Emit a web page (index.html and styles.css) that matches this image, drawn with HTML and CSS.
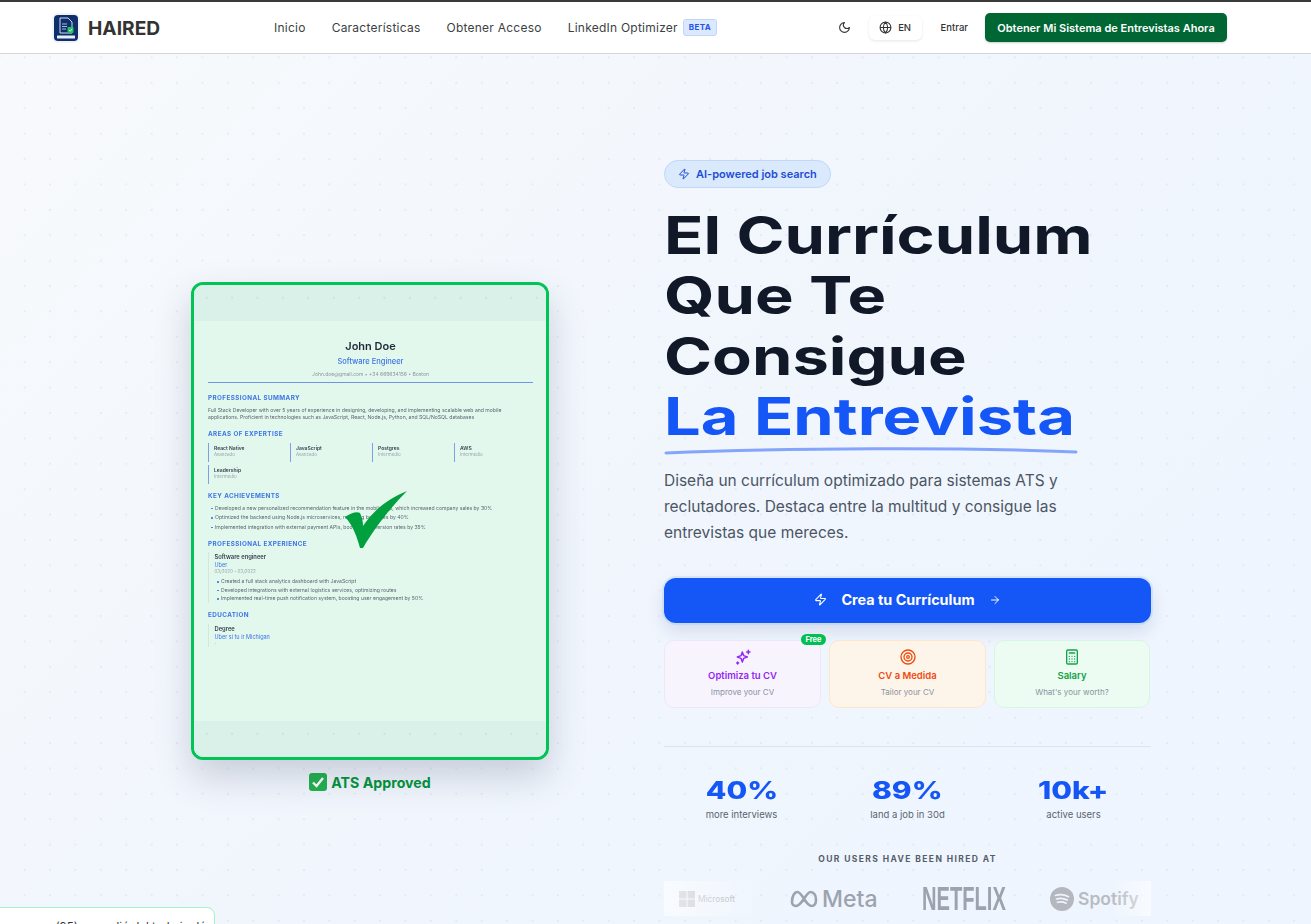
FILE: index.html
```html
<!DOCTYPE html>
<html lang="es">
<head>
<meta charset="utf-8">
<title>HAIRED</title>
<link rel="stylesheet" href="styles.css">
</head>
<body>
<div class="page">
  <header class="nav">
    <a class="brand">
      <span class="logo-tile">
        <svg width="24" height="26" viewBox="0 0 24 26"><rect width="24" height="26" rx="4" fill="#0f2f6b"/><path d="M6 3h8l4 4v11H6z" fill="none" stroke="#cfe0f5" stroke-width="1"/><path d="M8 9h5M8 11.500h5M8 14h4" stroke="#cfe0f5" stroke-width=".8"/><rect x="13.500" y="12" width="6" height="6" rx="1" fill="#22c55e"/><path d="M15 15l1.200 1.200 2-2.400" fill="none" stroke="#fff" stroke-width=".8"/><rect x="3" y="20.500" width="18" height="3" rx=".5" fill="#e8eef8"/></svg>
      </span>
      <span class="brand-name">HAIRED</span>
    </a>
    <nav class="links">
      <a>Inicio</a><a>Características</a><a>Obtener Acceso</a>
      <a class="with-tag">LinkedIn Optimizer <span class="beta">BETA</span></a>
    </nav>
    <div class="actions">
      <svg class="moon" width="13" height="13" viewBox="0 0 24 24" fill="none" stroke="#333" stroke-width="2" stroke-linecap="round" stroke-linejoin="round"><path d="M12 3a6 6 0 0 0 9 9 9 9 0 1 1-9-9Z"/></svg>
      <button class="lang"><svg width="13" height="13" viewBox="0 0 24 24" fill="none" stroke="#333" stroke-width="2"><circle cx="12" cy="12" r="10"/><path d="M12 2a14.500 14.500 0 0 0 0 20 14.500 14.500 0 0 0 0-20M2 12h20"/></svg>EN</button>
      <a class="login">Entrar</a>
      <a class="cta">Obtener Mi Sistema de Entrevistas Ahora</a>
    </div>
  </header>

  <main class="hero">
    <section class="preview">
      <div class="card">
        <div class="band"></div>
        <div class="resume">
          <div class="r-head">
            <div class="r-name">John Doe</div>
            <div class="r-title">Software Engineer</div>
            <div class="r-contact">John.doe@gmail.com • +34 669634156 • Boston</div>
          </div>
          <h4 class="r-h first">PROFESSIONAL SUMMARY</h4>
          <p class="r-summary">Full Stack Developer with over 5 years of experience in designing, developing, and implementing scalable web and mobile applications. Proficient in technologies such as JavaScript, React, Node.js, Python, and SQL/NoSQL databases</p>
          <h4 class="r-h areas">AREAS OF EXPERTISE</h4>
          <div class="skills">
            <div class="skill"><b>React Native</b><span>Avanzado</span></div>
            <div class="skill"><b>JavaScript</b><span>Avanzado</span></div>
            <div class="skill"><b>Postgres</b><span>Intermedio</span></div>
            <div class="skill"><b>AWS</b><span>Intermedio</span></div>
            <div class="skill"><b>Leadership</b><span>Intermedio</span></div>
          </div>
          <h4 class="r-h key">KEY ACHIEVEMENTS</h4>
          <ul class="r-list">
            <li>Developed a new personalized recommendation feature in the mobile app, which increased company sales by 30%</li>
            <li>Optimized the backend using Node.js microservices, reducing bug rates by 40%</li>
            <li>Implemented integration with external payment APIs, boosting conversion rates by 35%</li>
          </ul>
          <h4 class="r-h exp">PROFESSIONAL EXPERIENCE</h4>
          <div class="entry">
            <div class="e-role">Software engineer</div>
            <div class="e-org">Uber</div>
            <div class="e-date">03/2020 - 03/2022</div>
            <ul class="e-list">
              <li>Created a full stack analytics dashboard with JavaScript</li>
              <li>Developed integrations with external logistics services, optimizing routes</li>
              <li>Implemented real-time push notification system, boosting user engagement by 50%</li>
            </ul>
          </div>
          <h4 class="r-h edu">EDUCATION</h4>
          <div class="entry edu-entry">
            <div class="e-role">Degree</div>
            <div class="e-org">Uber si tu ir Michigan</div>
            <div class="e-date">-</div>
          </div>
        </div>
        <div class="band"></div>
        <svg class="bigcheck" width="66" height="62" viewBox="0 0 66 62"><path d="M0 26 C6 22 12 20 15 22 C17 26 18 31 18 35 C28 20 42 8 62 0 C48 14 30 36 18 57 L15 57 C12 46 8 34 0 26Z" fill="#00a03e"/></svg>
      </div>
      <div class="approved">
        <svg width="18" height="18" viewBox="0 0 18 18"><rect width="18" height="18" rx="3" fill="#22b14c"/><path d="M4 9.500l3.500 3.500L14 5" fill="none" stroke="#fff" stroke-width="2.400"/></svg>
        ATS Approved
      </div>
    </section>

    <section class="pitch">
      <div class="pill">
        <svg width="12" height="12" viewBox="0 0 24 24" fill="none" stroke="#1d4ed8" stroke-width="2" stroke-linejoin="round"><path d="M4 14a1 1 0 0 1-.78-1.630l9.900-10.200a.5.5 0 0 1 .86.460l-1.920 6.020A1 1 0 0 0 13 10h7a1 1 0 0 1 .78 1.630l-9.900 10.200a.5.5 0 0 1-.86-.460l1.920-6.020A1 1 0 0 0 11 14z"/></svg>
        AI-powered job search
      </div>
      <h1 class="title">
        <span class="t-line">El Currículum</span>
        <span class="t-line">Que Te</span>
        <span class="t-line">Consigue</span>
        <span class="t-line accent">La Entrevista</span>
      </h1>
      <svg class="swoosh" width="414" height="8" viewBox="0 0 414 8"><path d="M2 6 C120 1 300 0 412 5" fill="none" stroke="#84a5fb" stroke-width="3" stroke-linecap="round"/></svg>
      <p class="lead">Diseña un currículum optimizado para sistemas ATS y reclutadores. Destaca entre la multitud y consigue las entrevistas que mereces.</p>
      <a class="primary">
        <svg width="13" height="13" viewBox="0 0 24 24" fill="none" stroke="#fff" stroke-width="2" stroke-linejoin="round"><path d="M4 14a1 1 0 0 1-.78-1.630l9.900-10.200a.5.5 0 0 1 .86.460l-1.920 6.020A1 1 0 0 0 13 10h7a1 1 0 0 1 .78 1.630l-9.900 10.200a.5.5 0 0 1-.86-.460l1.920-6.020A1 1 0 0 0 11 14z"/></svg>
        <span>Crea tu Currículum</span>
        <svg width="12" height="12" viewBox="0 0 24 24" fill="none" stroke="#fff" stroke-width="2" stroke-linecap="round" stroke-linejoin="round"><path d="M5 12h14M12 5l7 7-7 7"/></svg>
      </a>
      <div class="tools">
        <div class="tool purple">
          <span class="free">Free</span>
          <svg width="16" height="16" viewBox="0 0 24 24" fill="none" stroke="#9327f5" stroke-width="2.200" stroke-linejoin="round" stroke-linecap="round"><path d="M11 4.500l2 5.500 5.500 2-5.500 2-2 5.500-2-5.500-5.500-2 5.500-2z"/><path d="M20 2v5M17.500 4.500h5M4 19.500v3M2.500 21h3"/></svg>
          <b>Optimiza tu CV</b><span class="sub">Improve your CV</span>
        </div>
        <div class="tool orange">
          <svg width="16" height="16" viewBox="0 0 24 24" fill="none" stroke="#f04a10" stroke-width="2"><circle cx="12" cy="12" r="10.500"/><circle cx="12" cy="12" r="6"/><circle cx="12" cy="12" r="2"/></svg>
          <b>CV a Medida</b><span class="sub">Tailor your CV</span>
        </div>
        <div class="tool green">
          <svg width="16" height="16" viewBox="0 0 24 24" fill="none" stroke="#11a34a" stroke-width="2" stroke-linecap="round"><rect x="4" y="1.500" width="16" height="21" rx="2"/><path d="M8 6h8M8 11h.01M12 11h.01M16 11h.01M8 15h.01M12 15h.01M16 15h.01M8 19h.01M12 19h.01M16 19h.01"/></svg>
          <b>Salary</b><span class="sub">What's your worth?</span>
        </div>
      </div>
      <div class="stats">
        <div class="stat"><strong><span>40%</span></strong><small>more interviews</small></div>
        <div class="stat"><strong><span>89%</span></strong><small>land a job in 30d</small></div>
        <div class="stat"><strong><span>10k+</span></strong><small>active users</small></div>
      </div>
      <div class="hired">OUR USERS HAVE BEEN HIRED AT</div>
      <div class="logos">
        <div class="l-ms"><svg width="16" height="16" viewBox="0 0 16 16"><path d="M0 0h7.500v7.500H0zM8.500 0H16v7.500H8.500zM0 8.500h7.500V16H0zM8.500 8.500H16V16H8.500z" fill="#c9ccd1"/></svg><span>Microsoft</span></div>
        <div class="l-meta"><svg width="28" height="18" viewBox="0 0 28 18" fill="none" stroke="#9ca3af" stroke-width="2.600"><path d="M2 12C2 6 4.500 2 7.500 2 12 2 16 16 21.500 16 24.500 16 26 13.500 26 10 26 5.500 24 2 20.500 2 16 2 12 16 6 16 3.500 16 2 14.500 2 12Z"/></svg><span>Meta</span></div>
        <div class="l-netflix"><span>NETFLIX</span></div>
        <div class="l-spotify"><svg width="24" height="24" viewBox="0 0 24 24"><circle cx="12" cy="12" r="12" fill="#b4b8be"/><path d="M5.500 8.500c4-1.200 9-.9 13 1.200M6.500 12c3.400-1 7.500-.7 10.800 1M7.500 15.300c2.800-.7 6-.5 8.600.9" fill="none" stroke="#eff4fc" stroke-width="1.700" stroke-linecap="round"/></svg><span>Spotify</span></div>
        <div class="fade left"></div>
        <div class="fade right"></div>
      </div>
    </section>
  </main>
  <div class="toast">empresa (95) aprendió del todo inglés y español</div>
</div>
</body>
</html>
```

FILE: styles.css
```css
* { box-sizing: border-box; }
html, body { margin: 0; height: 100%; }
body { font-family: Inter, "Liberation Sans", sans-serif; color: #111827; overflow: hidden; }
.page {
  position: relative;
  height: 924px;
  overflow: hidden;
  background-color: #f3f7fd;
  background-image:
    radial-gradient(circle, rgba(120,135,160,.11) .8px, transparent 1.2px),
    linear-gradient(135deg, #f8fafc 0%, #f1f6fd 50%, #eef5ff 100%);
  background-size: 25.4px 25.4px, 100% 100%;
  background-position: 12px -6px, 0 0;
}

/* nav */
.nav {
  height: 54px;
  display: flex;
  align-items: center;
  padding: 0 84px 0 52px;
  background: #fff;
  border-top: 2px solid #3a3a3a;
  border-bottom: 1px solid #d4d6da;
}
.brand { display: flex; align-items: center; gap: 8px; width: 222px; }
.logo-tile { width: 28px; height: 30px; display: flex; align-items: center; justify-content: center; background: #f1f3f6; border-radius: 6px; }
.brand-name { font-size: 19.2px; font-weight: 700; color: #333; }
.links { display: flex; align-items: center; gap: 26px; font-size: 12px; color: #3c3f44; letter-spacing: .24px; }
.with-tag { display: flex; align-items: center; gap: 5px; }
.beta { font-size: 8px; font-weight: 700; color: #2456e6; background: #dbe8fe; border: 1px solid #bfd6fb; border-radius: 3px; padding: 3px 5px; letter-spacing: .4px; line-height: 9px; }
.actions { margin-left: auto; display: flex; align-items: center; }
.moon { margin-right: 18px; }
.lang { display: flex; align-items: center; gap: 6px; height: 24px; width: 53px; justify-content: center; background: #fff; border: 0; border-radius: 6px; box-shadow: 0 1px 3px rgba(0,0,0,.1); font: 500 9.5px Inter, sans-serif; color: #333; padding: 0; }
.login { margin-left: 19px; font-size: 9.5px; font-weight: 500; color: #333; }
.cta { margin-left: 17px; width: 242px; height: 29px; display: flex; align-items: center; justify-content: center; background: #006633; color: #fff; border-radius: 5px; font-size: 11px; font-weight: 600; box-shadow: 0 1px 2px rgba(0,0,0,.2); }

/* hero */
.hero { display: flex; align-items: flex-start; padding-left: 191px; }
.preview { width: 358px; margin-top: 228px; margin-right: 115px; flex: none; }
.card {
  position: relative;
  width: 358px;
  height: 478px;
  border: 3px solid #00c455;
  border-radius: 12px;
  overflow: hidden;
  display: flex;
  flex-direction: column;
  background: #e3f8ec;
  box-shadow: 0 16px 36px rgba(50,60,90,.22);
}
.band {
  flex: none;
  height: 36px;
  background-color: #d9f1e8;
  background-image: radial-gradient(circle, rgba(120,135,160,.14) .8px, transparent 1.2px);
  background-size: 25.4px 25.4px;
}
.resume { flex: 1; padding: 17.5px 13px 0 14px; color: #4b5563; filter: blur(.5px); }
.r-head { text-align: center; padding-bottom: 4px; border-bottom: 1.400px solid #6f94e8; }
.r-name { font-size: 11px; line-height: 14px; font-weight: 600; color: #1f2937; }
.r-title { font-size: 7.5px; line-height: 10px; margin-top: 4px; color: #3b74e8; font-weight: 500; }
.r-contact { font-size: 5px; line-height: 8px; margin-top: 3px; color: #8a94a3; }
.r-h { margin: 0; font-size: 6.3px; line-height: 8px; font-weight: 700; color: #3b74e8; letter-spacing: .42px; }
.first { margin-top: 11px; }
.areas { margin-top: 8.5px; }
.key { margin-top: 8px; }
.exp { margin-top: 7.5px; }
.edu { margin-top: 8px; }
.r-summary { margin: 5.5px 0 0; font-size: 5.1px; line-height: 7px; color: #5b6472; }
.skills { margin-top: 5px; display: grid; grid-template-columns: repeat(4, 82px); row-gap: 3px; }
.skill { height: 19px; border-left: 1.200px solid #7d9fea; padding: 2.5px 0 0 5px; display: flex; flex-direction: column; width: 78px; }
.skill b { font-size: 5px; line-height: 7px; font-weight: 600; color: #374151; }
.skill span { font-size: 4.5px; line-height: 6px; color: #9aa3af; }
.r-list, .e-list { list-style: none; margin: 0; padding: 0; font-size: 5.1px; color: #5b6472; }
.r-list { margin-top: 4px; line-height: 9.5px; padding-left: 7px; }
.e-list { margin-top: 2.75px; line-height: 8.5px; padding-left: 6.5px; }
.r-list li, .e-list li { position: relative; }
.r-list li::before, .e-list li::before { content: ""; position: absolute; left: -4px; top: 4px; width: 1.5px; height: 1.5px; border-radius: 50%; background: #3b74e8; }
.entry { margin-top: 4px; padding: 1px 0 0 5.5px; border-left: 1px solid #d5e6df; }
.edu-entry { margin-top: 5px; }
.e-role { font-size: 5.8px; line-height: 8px; font-weight: 600; color: #374151; }
.e-org { font-size: 5.5px; line-height: 8px; color: #3b74e8; }
.e-date { font-size: 4.5px; line-height: 6px; color: #9aa3af; }
.bigcheck { position: absolute; left: 151px; top: 206px; }
.approved { display: flex; align-items: center; justify-content: center; gap: 4px; height: 24px; margin-top: 10px; font-size: 14.2px; font-weight: 700; color: #00943a; }

/* pitch */
.pitch { width: 487px; flex: none; padding-top: 106px; }
.pill { display: inline-flex; align-items: center; gap: 6px; height: 28px; width: 167px; padding-left: 13px; font-size: 11px; font-weight: 600; color: #1d4ed8; background: #dbe9fd; border: 1px solid #bfd8fb; border-radius: 14px; }
.title { margin: 18px 0 0; font-size: 52px; line-height: 60.3px; font-weight: 700; color: #111827; letter-spacing: 0; }
.t-line { display: block; transform: scaleX(1.25); transform-origin: 0 50%; white-space: nowrap; }
.accent { color: #1556f7; }
.swoosh { display: block; margin: 0; }
.lead { margin: 13px 0 0; width: 420px; font-size: 15.5px; line-height: 26px; color: #4b5563; }
.primary { display: flex; align-items: center; justify-content: center; gap: 14px; height: 45px; margin-top: 32px; padding-bottom: 2px; background: #1556f7; color: #fff; border-radius: 12px; font-size: 14.4px; font-weight: 700; box-shadow: 0 0 0 2px rgba(147,190,250,.25), 0 8px 18px rgba(30,60,130,.14); }
.tools { margin-top: 17px; display: grid; grid-template-columns: 157px 157px 156px; gap: 8px; }
.tool { position: relative; height: 68px; border-radius: 10px; border: 1px solid; display: flex; flex-direction: column; align-items: center; padding-top: 8px; }
.tool b { font-size: 9.5px; line-height: 12px; margin-top: 5px; font-weight: 600; }
.sub { font-size: 8px; line-height: 10px; margin-top: 5px; color: #8b93a1; }
.purple { background: #f8f4fe; border-color: #efe6fc; color: #9327f5; }
.orange { background: #fef5ea; border-color: #fde6cc; color: #f04a10; }
.green { background: #ecfcf2; border-color: #d5f6e2; color: #11a34a; }
.free { position: absolute; top: -7px; right: -6px; width: 25px; height: 11px; border-radius: 6px; background: #00bf53; color: #fff; font-size: 7.5px; line-height: 11px; font-weight: 700; text-align: center; }
.stats { margin-top: 38px; padding-top: 31px; border-top: 1px solid #e0e4ea; display: grid; grid-template-columns: repeat(3, 166px); justify-content: center; }
.stat { display: flex; flex-direction: column; align-items: center; }
.stat strong { height: 26px; font-size: 24px; line-height: 26px; font-weight: 800; color: #1556f7; }
.stat strong span { display: inline-block; transform: scaleX(1.25); }
.stat small { margin-top: 5px; font-size: 9.5px; line-height: 12px; color: #5b6472; }
.hired { margin-top: 33px; text-align: center; font-size: 8.5px; line-height: 10px; font-weight: 700; letter-spacing: 1.4px; color: #555d6b; }
.logos { position: relative; margin-top: 17px; height: 35px; display: flex; align-items: center; }
.logos > div:not(.fade) { display: flex; align-items: center; flex: none; }
.l-ms { width: 126px; padding-left: 15px; gap: 3px; font-size: 8.3px; color: #b9bdc4; }
.l-meta { width: 132px; gap: 4px; font-size: 23px; font-weight: 500; color: #9ca3af; }
.l-netflix { width: 128px; font-family: "Liberation Sans", sans-serif; font-size: 33px; font-weight: 700; color: #9ca3af; }
.l-netflix span { display: inline-block; transform: scaleX(.61); transform-origin: 0 50%; }
.l-spotify { gap: 4px; font-size: 17.5px; font-weight: 600; color: #b8bcc2; }
.fade { position: absolute; top: 0; bottom: 0; width: 96px; }
.fade.left { left: 0; background: linear-gradient(90deg, rgba(255,255,255,.55), rgba(255,255,255,0)); }
.fade.right { right: 0; width: 40px; background: linear-gradient(270deg, rgba(255,255,255,.6), rgba(255,255,255,0)); }

.toast { position: absolute; left: -8px; top: 907px; width: 223px; height: 40px; padding: 12px 0 0 12px; background: #fff; border: 1px solid #a7f0c8; border-radius: 8px; font-size: 11.5px; color: #333; white-space: nowrap; overflow: hidden; }
```
